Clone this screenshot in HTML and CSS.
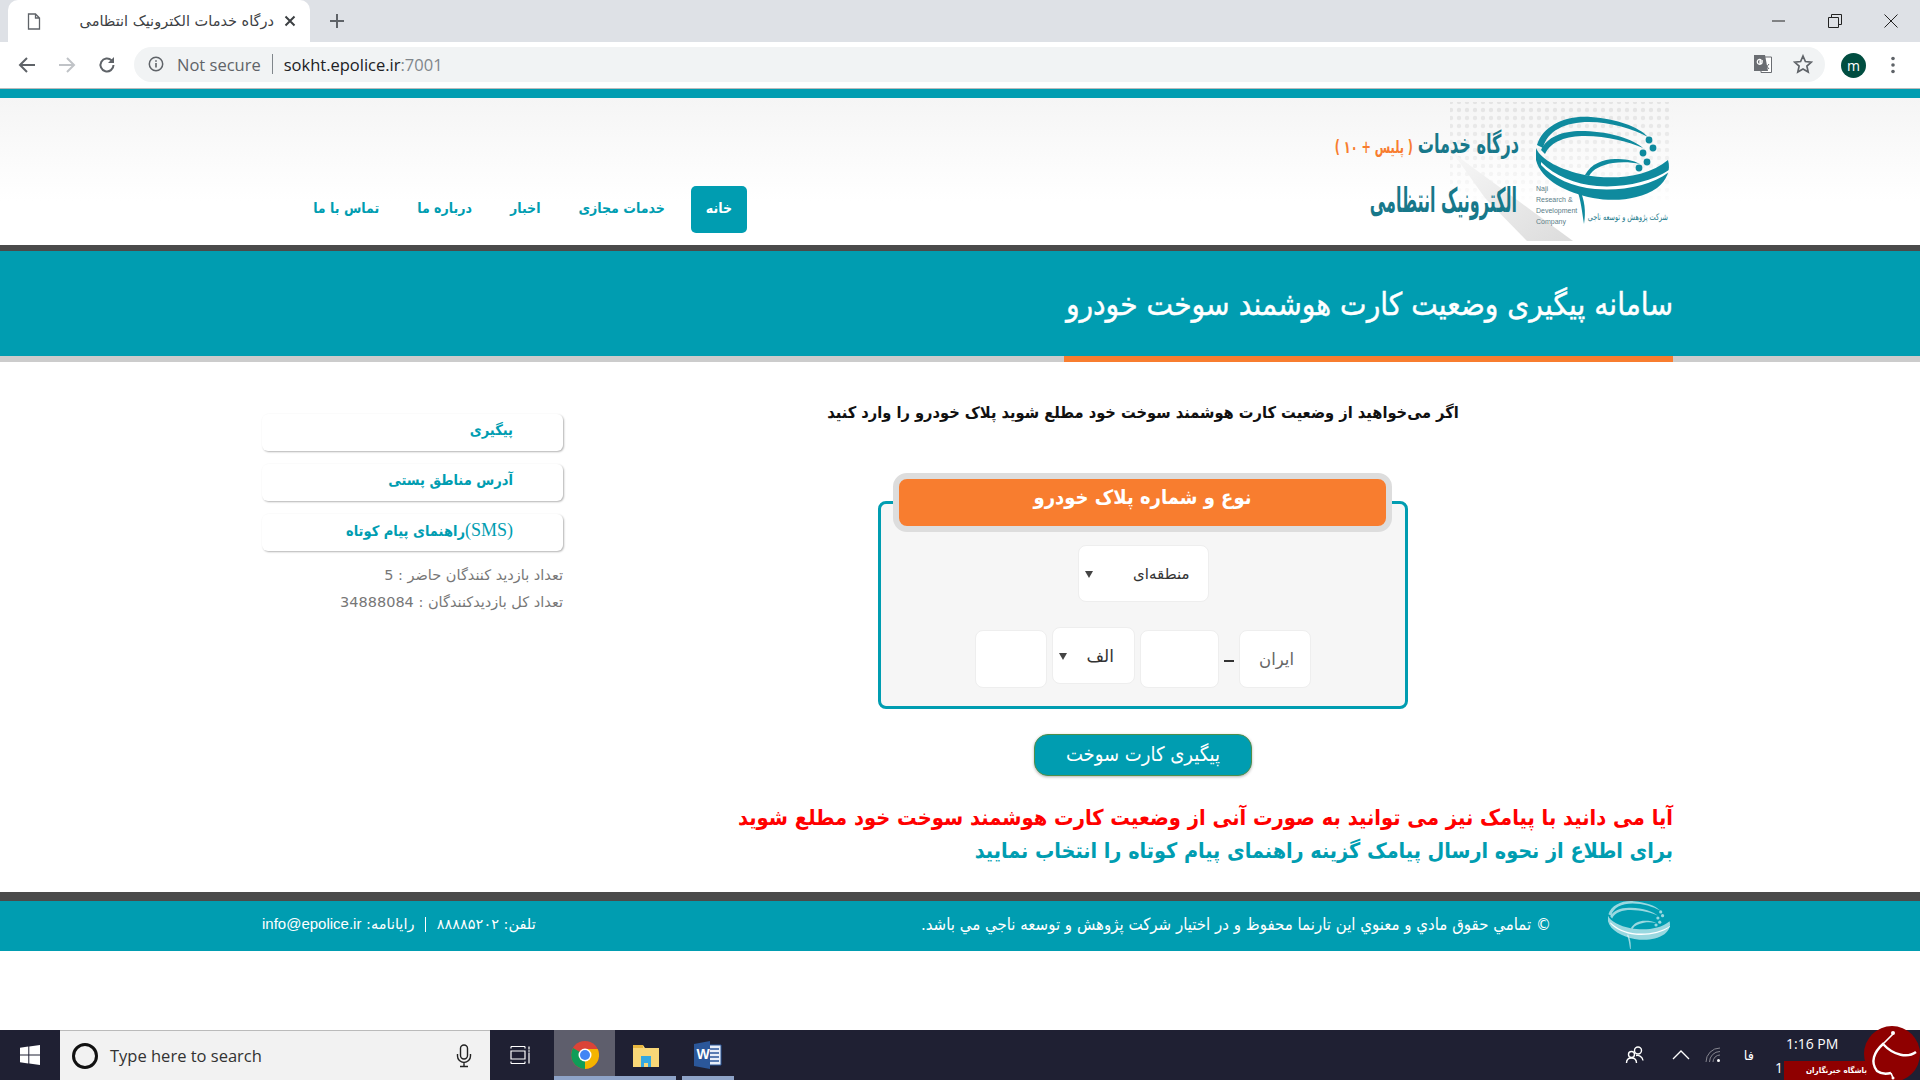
FILE: index.html
```html
<!DOCTYPE html>
<html lang="fa">
<head>
  <meta charset="UTF-8">
  <title>درگاه خدمات الکترونیک انتظامی</title>
  <link rel="stylesheet" href="styles.css">
</head>
<body>
  <svg class="defs" width="0" height="0" aria-hidden="true">
    <defs>
      <symbol id="rings" viewBox="195 10 145 120">
        <path d="M202 47C208 27 232 17 256 19C282 21 304 29 313 39C298 31 276 24 254 24C230 24 212 33 208 50Z"/>
        <path d="M206 52C212 38 230 32 250 33C276 34 298 41 308 50C294 44 272 38 250 38C232 38 216 43 210 56Z"/>
        <path d="M201 50C206 62 226 72 250 77C276 82 312 80 333 62C336 72 332 82 322 90C304 102 280 104 258 100C232 95 206 82 201 62Z"/>
        <path class="ring-gap" d="M206 64C220 78 240 86 262 88C288 90 316 84 334 72L334 74C316 88 288 93 260 91C238 89 218 80 206 67Z"/>
        <path d="M250 77C256 66 268 61 280 61C290 61 298 62 305 66C296 64 286 64 278 65C266 67 258 71 254 78Z"/>
        <path d="M244 90C250 102 251 114 249 126C247 114 246 102 242 92Z"/>
        <circle cx="314" cy="42" r="3.4"/>
        <circle cx="318" cy="50" r="3.4"/>
        <circle cx="308" cy="55" r="3.4"/>
        <circle cx="312" cy="64" r="3.4"/>
        <circle cx="304" cy="70" r="3.4"/>
      </symbol>
    </defs>
  </svg>

  <!-- browser chrome -->
  <div class="tabstrip">
    <div class="tab">
      <svg class="tab-doc" width="14" height="17" viewBox="0 0 14 17"><path d="M1.5 1h7l4 4v11h-11zM8.5 1v4h4" fill="none" stroke="#5f6368" stroke-width="1.3"/></svg>
      <span class="tab-title">درگاه خدمات الکترونیک انتظامی</span>
      <svg width="12" height="12" viewBox="0 0 12 12"><path d="M1.5 1.5l9 9M10.500 1.5l-9 9" stroke="#3c4043" stroke-width="2"/></svg>
    </div>
    <svg class="tab-new" width="16" height="16" viewBox="0 0 16 16"><path d="M8 1v14M1 8h14" stroke="#5f6368" stroke-width="2"/></svg>
    <div class="win-controls">
      <svg width="14" height="14" viewBox="0 0 14 14"><path d="M0 7h13" stroke="#222" stroke-width="1"/></svg>
      <svg width="14" height="14" viewBox="0 0 14 14"><path d="M.5 3.5h10v10H.5zM3.5 3V.5h10v10H11" fill="none" stroke="#222"/></svg>
      <svg width="14" height="14" viewBox="0 0 14 14"><path d="M.5.5l13 13M13.5.5l-13 13" stroke="#222"/></svg>
    </div>
  </div>
  <div class="toolbar">
    <svg width="18" height="18" viewBox="0 0 18 18"><path d="M17 9H2.500M9 2L2 9l7 7" fill="none" stroke="#5f6368" stroke-width="2"/></svg>
    <svg width="18" height="18" viewBox="0 0 18 18"><path d="M1 9h14.500M9 2l7 7-7 7" fill="none" stroke="#c0c3c7" stroke-width="2"/></svg>
    <svg width="18" height="18" viewBox="0 0 18 18"><path d="M15.500 9A6.500 6.500 0 1 1 13.600 4.400" fill="none" stroke="#5f6368" stroke-width="2"/><path d="M16 1v6h-6z" fill="#5f6368"/></svg>
    <div class="omnibox">
      <svg width="16" height="16" viewBox="0 0 16 16"><circle cx="8" cy="8" r="6.700" fill="none" stroke="#5f6368" stroke-width="1.500"/><path d="M8 7v4.500M8 4.200v1.600" stroke="#5f6368" stroke-width="1.600"/></svg>
      <span class="not-secure">Not secure</span>
      <span class="omni-sep"></span>
      <span class="url">sokht.epolice.ir<span class="url-port">:7001</span></span>
      <svg class="omni-translate" width="20" height="20" viewBox="0 0 20 20"><path d="M8 3h10.500v15.500H8z" fill="#fff" stroke="#6a6d72"/><path d="M1 1h11l3 16H1z" fill="#6a6d72"/><path d="M10 7H7v2h2a2.500 2.500 0 1 1-.7-3.200" fill="none" stroke="#fff" stroke-width="1.300"/><path d="M12 10l4 5M16 10l-4 5" stroke="#6a6d72"/></svg>
      <svg class="omni-star" width="20" height="20" viewBox="0 0 20 20"><path d="M10 2l2.400 5.500 6 .6-4.500 4 1.300 5.900L10 15l-5.200 3 1.300-5.900-4.500-4 6-.6z" fill="none" stroke="#5f6368" stroke-width="1.700"/></svg>
    </div>
    <span class="avatar">m</span>
    <svg class="kebab" width="6" height="20" viewBox="0 0 6 20"><circle cx="3" cy="3.500" r="1.800" fill="#5f6368"/><circle cx="3" cy="10" r="1.800" fill="#5f6368"/><circle cx="3" cy="16.500" r="1.800" fill="#5f6368"/></svg>
  </div>

  <!-- site -->
  <div class="page" dir="rtl">
    <header class="site-header">
      <div class="container header-row">
        <svg class="logo" width="338" height="147" viewBox="0 0 338 147">
          <defs>
            <pattern id="dots" width="8" height="8" patternUnits="userSpaceOnUse"><circle cx="4" cy="4" r="2.200" fill="#e3e3e3"/></pattern>
            <linearGradient id="dotfade" x1="0" y1="0" x2="0" y2="1"><stop offset="0" stop-color="#fff"/><stop offset="1" stop-color="#000"/></linearGradient>
            <linearGradient id="wedge" x1="0" y1="0" x2="1" y2="1"><stop offset="0" stop-color="#f7f7f7"/><stop offset="1" stop-color="#dcdcdc"/></linearGradient>
            <mask id="dotmask"><rect width="338" height="110" fill="url(#dotfade)"/></mask>
          </defs>
          <rect x="115" y="4" width="223" height="100" fill="url(#dots)" mask="url(#dotmask)"/>
          <path d="M118 55L238 143H192L150 100z" fill="url(#wedge)"/>
          <use href="#rings" x="195" y="10" width="145" height="120" class="logo-rings"/>
          <text class="logo-title" transform="translate(184 55) scale(.62 1)">درگاه خدمات</text>
          <text class="logo-plus" transform="translate(78 55) scale(.66 1)">( پلیس + ۱۰ )</text>
          <text class="logo-title logo-title-big" transform="translate(182 114) scale(.47 1)">الکترونیک انتظامی</text>
          <text class="logo-en" x="201" y="93">Naji</text>
          <text class="logo-en" x="201" y="104">Research &amp;</text>
          <text class="logo-en" x="201" y="115">Development</text>
          <text class="logo-en" x="201" y="126">Company</text>
          <text class="logo-co" transform="translate(333 122) scale(.72 1)">شرکت پژوهش و توسعه ناجی</text>
        </svg>
        <nav class="main-nav">
          <a class="nav-link active">خانه</a>
          <a class="nav-link">خدمات مجازی</a>
          <a class="nav-link">اخبار</a>
          <a class="nav-link">درباره ما</a>
          <a class="nav-link">تماس با ما</a>
        </nav>
      </div>
    </header>

    <section class="title-band">
      <div class="container"><h1>سامانه پیگیری وضعیت کارت هوشمند سوخت خودرو</h1></div>
    </section>
    <div class="title-rule"><div class="container"><span class="title-rule-accent"></span></div></div>

    <div class="container content">
      <main class="main-col">
        <p class="intro">اگر می‌خواهید از وضعیت کارت هوشمند سوخت خود مطلع شوید پلاک خودرو را وارد کنید</p>

        <div class="plate-box">
          <div class="plate-title"><span>نوع و شماره پلاک خودرو</span></div>
          <div class="plate-row plate-row-type">
            <div class="select-wrap select-type"><select><option>منطقه‌ای</option></select></div>
          </div>
          <div class="plate-row">
            <input class="plate-input input-iran" placeholder="ایران">
            <span class="plate-dash"></span>
            <input class="plate-input input-three">
            <div class="select-wrap select-letter"><select><option>الف</option></select></div>
            <input class="plate-input input-two">
          </div>
        </div>

        <button class="track-btn">پیگیری کارت سوخت</button>

        <div class="notes">
          <p class="note-red">آیا می دانید با پیامک نیز می توانید به صورت آنی از وضعیت کارت هوشمند سوخت خود مطلع شوید</p>
          <p class="note-teal">برای اطلاع از نحوه ارسال پیامک گزینه راهنمای پیام کوتاه را انتخاب نمایید</p>
        </div>
      </main>

      <aside class="sidebar">
        <a class="side-link">پیگیری</a>
        <a class="side-link">آدرس مناطق پستی</a>
        <a class="side-link"><span class="sms">(SMS)</span>راهنمای پیام کوتاه</a>
        <p class="stat stat-first">تعداد بازدید کنندگان حاضر : 5</p>
        <p class="stat">تعداد کل بازدیدکنندگان : 34888084</p>
      </aside>
    </div>

    <footer class="site-footer">
      <div class="container footer-row">
        <svg class="footer-logo" width="68" height="48" viewBox="0 0 68 48"><use href="#rings" y="-4" width="68" height="56"/></svg>
        <span class="copyright">© تمامي حقوق مادي و معنوي اين تارنما محفوظ و در اختيار شركت پژوهش و توسعه ناجي مي باشد.</span>
        <span class="contact">تلفن: ۸۸۸۸۵۲۰۲ <i class="contact-sep"></i> رایانامه: <bdi>info@epolice.ir</bdi></span>
      </div>
    </footer>
  </div>

  <!-- windows taskbar -->
  <div class="taskbar">
    <div class="tb-start">
      <svg width="20" height="20" viewBox="0 0 20 20"><path d="M0 2.800l8.300-1.200v8H0zM9.300 1.400L20 0v9.600H9.300zM0 10.500h8.300v8L0 17.300zM9.300 10.500H20V20L9.300 18.600z" fill="#fff"/></svg>
    </div>
    <div class="tb-search">
      <svg width="28" height="28" viewBox="0 0 28 28"><circle cx="14" cy="14" r="11.500" fill="none" stroke="#111" stroke-width="3"/></svg>
      <span class="tb-search-text">Type here to search</span>
      <svg class="tb-mic" width="16" height="24" viewBox="0 0 16 24"><rect x="4.500" y="1" width="7" height="14" rx="3.500" fill="none" stroke="#222" stroke-width="1.400"/><path d="M1.500 10v2a6.500 6.500 0 0 0 13 0v-2M8 18.500V22M4 22.500h8" fill="none" stroke="#222" stroke-width="1.400"/></svg>
    </div>
    <div class="tb-app tb-taskview">
      <svg width="20" height="18" viewBox="0 0 20 18"><path d="M1 .5h14M1 17.500h14M1 5h14v8H1zM19 .5v3M19 6.500v11M1 .5v2M15 .5v2M1 15.500v2M15 15.500v2" fill="none" stroke="#fff" stroke-width="1.200"/><path d="M18 4.500h2v1h-2z" fill="#fff"/></svg>
    </div>
    <div class="tb-app tb-chrome tb-active">
      <svg width="28" height="28" viewBox="0 0 28 28">
        <circle cx="14" cy="14" r="14" fill="#db4437"/>
        <path d="M14 8h12.700A14 14 0 0 1 14 28l-4-3z" fill="#f4b400"/>
        <path d="M14 14L14 28A14 14 0 0 1 2 7z" fill="#0f9d58"/>
        <circle cx="14" cy="14" r="6.500" fill="#fff"/><circle cx="14" cy="14" r="5" fill="#4285f4"/>
      </svg>
    </div>
    <div class="tb-app tb-folder tb-open">
      <svg width="28" height="28" viewBox="0 0 28 28"><path d="M1 4h10l2 3h14v19H1z" fill="#f9d777"/><path d="M1 4h10v3H1z" fill="#e8b63f"/><path d="M9 26V15h10v11h-3v-4h-4v4z" fill="#35a8e0"/></svg>
    </div>
    <div class="tb-app tb-word tb-open">
      <svg width="28" height="28" viewBox="0 0 28 28"><path d="M10 4h17v20H10z" fill="#e8eef8" stroke="#2b579a"/><path d="M15 8h10M15 12h10M15 16h10M15 20h10" stroke="#2b579a" stroke-width="1.500"/><path d="M0 3l16-3v28L0 25z" fill="#2b579a"/><text class="tb-word-w" x="2.500" y="18">W</text></svg>
    </div>
    <div class="tray">
      <svg width="20" height="20" viewBox="0 0 20 20"><circle cx="13" cy="5.500" r="3.500" fill="none" stroke="#fff" stroke-width="1.400"/><circle cx="6.500" cy="9.500" r="3" fill="none" stroke="#fff" stroke-width="1.400"/><path d="M1.500 18c0-3 2-5 5-5s5 2 5 5M11 10.500c3-.5 6.500 1 7 5" fill="none" stroke="#fff" stroke-width="1.400"/></svg>
      <svg class="tray-chevron" width="18" height="10" viewBox="0 0 18 10"><path d="M1 9l8-8 8 8" fill="none" stroke="#fff" stroke-width="1.300"/></svg>
      <svg class="tray-wifi" width="16" height="16" viewBox="0 0 16 16"><path d="M1 15A14 14 0 0 1 15 1M4.500 15A10.500 10.500 0 0 1 15 4.500M8 15a7 7 0 0 1 7-7" fill="none" stroke="#85858f"/><circle cx="13.500" cy="13.500" r="1.500" fill="#fff"/></svg>
      <span class="tray-lang">فا</span>
      <div class="tray-clock"><span>1:16 PM</span><span class="tray-date">1</span></div>
    </div>
    <div class="watermark">
      <div class="wm-ribbon">باشگاه خبرنگاران</div>
      <div class="wm-circle">
        <svg width="56" height="56" viewBox="0 0 56 56"><path d="M52 26C44 32 30 30 19 18C10 26 6 36 13 45C17 48 23 48 27 47" fill="none" stroke="#fff" stroke-width="2.400"/><path d="M29 8C25 12 22 15 19 18M27 47L29 52" fill="none" stroke="#fff" stroke-width="1.600"/><circle cx="29" cy="7" r="2" fill="#fff"/><circle cx="29" cy="52" r="1.500" fill="#fff"/></svg>
      </div>
    </div>
  </div>
</body>
</html>
```

FILE: styles.css
```css
:root {
  --teal: #009db1;
  --dark: #4a4a4a;
  --orange: #f87d2f;
  --chrome-gray: #5f6368;
  --fa-font: "DejaVu Sans", sans-serif;
  --fa-narrow: "DejaVu Sans Condensed", "DejaVu Sans", sans-serif;
  --ui-font: "Open Sans", "DejaVu Sans", sans-serif;
}

* {
  box-sizing: border-box;
  margin: 0;
  padding: 0;
}

html, body {
  height: 100%;
}

body {
  display: flex;
  flex-direction: column;
  height: 1080px;
  overflow: hidden;
  background: #fff;
  font-family: var(--fa-font);
}

.defs {
  position: absolute;
}

/* browser chrome */
.tabstrip {
  display: flex;
  align-items: center;
  flex: 0 0 42px;
  height: 42px;
  background: #dee1e6;
}

.tab {
  display: flex;
  align-items: center;
  width: 302px;
  height: 42px;
  margin-left: 8px;
  padding: 0 14px 0 19px;
  background: #fff;
  border-radius: 10px 10px 0 0;
}

.tab-title {
  flex: 1;
  margin: 0 10px 0 33px;
  direction: rtl;
  font-size: 14.5px;
  white-space: nowrap;
  color: #3c4043;
}

.tab-new {
  margin-left: 19px;
}

.win-controls {
  display: flex;
  gap: 42px;
  margin-left: auto;
  padding-right: 22px;
}

.toolbar {
  display: flex;
  align-items: center;
  gap: 22px;
  flex: 0 0 47px;
  height: 47px;
  padding: 0 24px 0 18px;
  background: #fff;
  border-bottom: 1px solid #bbb;
}

.omnibox {
  display: flex;
  align-items: center;
  flex: 1;
  height: 35px;
  margin-left: -4px;
  margin-bottom: 2px;
  padding: 0 12px 0 14px;
  background: #f1f3f4;
  border-radius: 18px;
  font-family: var(--ui-font);
  font-size: 16.5px;
}

.not-secure {
  margin-left: 13px;
  color: var(--chrome-gray);
}

.omni-sep {
  width: 1px;
  height: 20px;
  margin: 0 11px;
  background: #80868b;
}

.url {
  color: #202124;
}

.url-port {
  color: #80868b;
}

.omni-translate {
  margin-left: auto;
  margin-right: 20px;
}

.avatar {
  display: flex;
  align-items: center;
  justify-content: center;
  width: 25px;
  height: 25px;
  margin-left: -6px;
  border-radius: 50%;
  background: #004d40;
  color: #fff;
  font-family: var(--ui-font);
  font-size: 14px;
}

.kebab {
  margin-left: 2px;
}

/* site */
.page {
  flex: 1;
  min-height: 0;
}

.container {
  width: 1411px;
  margin-right: 247px;
}

.site-header {
  height: 162px;
  border-top: 9px solid var(--teal);
  border-bottom: 6px solid var(--dark);
  background: linear-gradient(#f5f5f5, #fff 70%);
}

.header-row {
  display: flex;
  align-items: flex-end;
  height: 147px;
}

.logo {
  flex: none;
}

.logo text {
  direction: rtl;
  font-family: var(--fa-font);
}

.logo-rings {
  fill: #0f8a9e;
}

.ring-gap {
  fill: #fff;
}

.logo .logo-title {
  font-size: 26px;
  font-weight: bold;
  fill: #17788a;
}

.logo .logo-title-big {
  font-size: 34px;
}

.logo .logo-plus {
  font-size: 17px;
  font-weight: bold;
  fill: #f87d2f;
}

.logo .logo-en {
  direction: ltr;
  font-family: "Liberation Sans", sans-serif;
  font-size: 7px;
  fill: #5a7d88;
}

.logo .logo-co {
  font-size: 9px;
  fill: #17788a;
}

.main-nav {
  display: flex;
  align-items: center;
  margin-bottom: 12px;
  margin-right: 588px;
}

.nav-link {
  height: 47px;
  padding: 0 19px;
  font-family: var(--fa-narrow);
  font-size: 14px;
  font-weight: bold;
  line-height: 45px;
  color: var(--teal);
}

.nav-link.active {
  margin-left: 7px;
  padding: 0 15px;
  border-radius: 5px;
  background: var(--teal);
  color: #fff;
}

.title-band {
  height: 105px;
  background: var(--teal);
}

.title-band h1 {
  padding-top: 33px;
  font-family: var(--fa-narrow);
  font-size: 31.3px;
  font-weight: normal;
  line-height: 40px;
  color: #fff;
  -webkit-text-stroke: 0.4px #fff;
}

.title-rule {
  height: 6px;
  background: #ccc;
}

.title-rule-accent {
  display: block;
  width: 609px;
  height: 6px;
  background: var(--orange);
}

.content {
  display: flex;
  gap: 50px;
  height: 530px;
}

.main-col {
  display: flex;
  flex-direction: column;
  align-items: center;
  width: 1060px;
}

.intro {
  margin-top: 39px;
  font-family: var(--fa-narrow);
  font-size: 16.3px;
  font-weight: bold;
  line-height: 24px;
  color: #111;
}

.plate-box {
  position: relative;
  width: 530px;
  height: 208px;
  margin-top: 76px;
  padding-top: 41px;
  background: #f6f6f6;
  border: 3px solid var(--teal);
  border-radius: 8px;
}

.plate-title {
  position: absolute;
  top: -31px;
  left: 12px;
  width: 499px;
  height: 59px;
  background: var(--orange);
  border: 6px solid #ddd;
  border-radius: 14px;
  color: #fff;
  font-family: var(--fa-narrow);
  font-size: 20px;
  font-weight: bold;
  line-height: 36px;
  text-align: center;
}

.plate-row {
  display: flex;
  justify-content: center;
  align-items: flex-start;
}

.plate-row-type {
  margin-bottom: 28px;
}

.plate-row:last-child {
  gap: 5px;
}

.select-wrap {
  position: relative;
  background: #fff;
  border: 1px solid #eee;
  border-radius: 8px;
}

.select-wrap::after {
  content: "";
  position: absolute;
  top: 25px;
  left: 6px;
  border: 4px solid transparent;
  border-top: 7px solid #444;
  border-bottom: 0;
}

.select-wrap select {
  width: 100%;
  height: 100%;
  appearance: none;
  border: none;
  background: transparent;
  font-family: var(--fa-font);
  font-size: 15px;
  color: #333;
  padding-right: 18px;
}

.select-type {
  width: 131px;
  height: 57px;
}

.select-letter {
  width: 83px;
  height: 57px;
  margin-top: -3px;
}

.select-letter select {
  font-size: 17px;
  padding-right: 20px;
}

.plate-input {
  height: 58px;
  background: #fff;
  border: 1px solid #eee;
  border-radius: 8px;
  font-family: var(--fa-font);
  font-size: 16.5px;
  padding: 0 16px;
}

.plate-input::placeholder {
  color: #666;
}

.input-iran {
  width: 72px;
}

.input-three {
  width: 79px;
}

.input-two {
  width: 72px;
}

.plate-dash {
  width: 10px;
  height: 2px;
  margin-top: 30px;
  background: #333;
}

.track-btn {
  width: 218px;
  height: 42px;
  margin-top: 25px;
  padding-bottom: 2px;
  background: var(--teal);
  border: 1px solid #4f8f4a;
  border-radius: 14px;
  box-shadow: 0 1px 3px rgba(0,0,0,0.3);
  color: #fff;
  font-family: var(--fa-narrow);
  font-size: 20px;
  cursor: pointer;
}

.notes {
  align-self: stretch;
  margin-top: 25px;
  font-family: var(--fa-narrow);
  font-weight: bold;
  line-height: 33px;
}

.note-red {
  font-size: 21.7px;
  color: #f00;
}

.note-teal {
  font-size: 21.4px;
  color: var(--teal);
}

.sidebar {
  width: 301px;
  padding-top: 52px;
}

.side-link {
  display: block;
  height: 37px;
  margin-bottom: 13px;
  padding-right: 50px;
  background: #fff;
  border-radius: 6px;
  box-shadow: 1px 1px 2px rgba(0,0,0,0.3);
  font-family: var(--fa-narrow);
  font-size: 14.5px;
  font-weight: bold;
  line-height: 33px;
  color: var(--teal);
}

.sms {
  font-family: "Liberation Serif", serif;
  font-size: 18px;
  font-weight: normal;
}

.stat {
  font-size: 14.5px;
  line-height: 27px;
  color: #777;
}

.stat-first {
  margin-top: -2px;
}

.site-footer {
  height: 59px;
  border-top: 9px solid var(--dark);
  background: var(--teal);
  color: #fff;
  font-size: 14.5px;
}

.footer-row {
  display: flex;
  align-items: center;
  height: 50px;
  padding-bottom: 5px;
}

.footer-logo {
  align-self: flex-start;
  fill: rgba(255,255,255,0.6);
}

.footer-logo .ring-gap {
  fill: #009db1;
}

.copyright {
  margin-right: 54px;
  font-family: var(--fa-narrow);
  font-size: 16.7px;
}

.contact {
  margin-right: auto;
}

.contact-sep {
  display: inline-block;
  width: 1px;
  height: 15px;
  margin: 0 6px;
  vertical-align: middle;
  background: #fff;
}

.contact bdi {
  font-family: "Liberation Sans", sans-serif;
  font-size: 15px;
}

/* windows taskbar */
.taskbar {
  position: relative;
  display: flex;
  flex: 0 0 50px;
  height: 50px;
  background: #1f2033;
}

.tb-start {
  display: flex;
  align-items: center;
  justify-content: center;
  width: 60px;
}

.tb-search {
  display: flex;
  align-items: center;
  width: 430px;
  padding: 0 12px 0 11px;
  background: #f2f2f2;
  border-top: 1px solid #bbb;
}

.tb-search-text {
  margin-left: 11px;
  font-family: var(--ui-font);
  font-size: 16.5px;
  color: #333;
}

.tb-mic {
  margin-left: auto;
  margin-right: 6px;
}

.tb-app {
  display: flex;
  align-items: center;
  justify-content: center;
  position: relative;
  height: 50px;
}

.tb-taskview {
  width: 64px;
  padding-right: 4px;
}

.tb-chrome {
  width: 61px;
}

.tb-folder {
  width: 61px;
  margin-right: 6px;
}

.tb-word {
  width: 52px;
}

.tb-active {
  background: #5e5e6c;
}

.tb-active::after,
.tb-open::after {
  content: "";
  position: absolute;
  left: 0;
  right: 0;
  bottom: 0;
  height: 4px;
  background: #8ea3c8;
}

.tb-word-w {
  font-family: "Liberation Sans", sans-serif;
  font-size: 14px;
  font-weight: bold;
  fill: #fff;
}

.tray {
  display: flex;
  align-items: center;
  margin-left: auto;
  padding-right: 82px;
  color: #fff;
}

.tray-chevron {
  margin-left: 27px;
}

.tray-wifi {
  margin-left: 15px;
}

.tray-lang {
  margin-left: 23px;
  font-size: 13px;
}

.tray-clock {
  display: flex;
  flex-direction: column;
  align-items: flex-start;
  align-self: flex-start;
  margin-left: 32px;
  width: 52px;
  white-space: nowrap;
  font-family: var(--ui-font);
  font-size: 14px;
  line-height: 24px;
  padding-top: 2px;
}

.tray-date {
  margin-left: -11px;
}

.watermark {
  position: absolute;
  right: 0;
  bottom: 0;
  width: 136px;
  height: 54px;
}

.wm-circle {
  position: absolute;
  top: 0;
  right: 0;
  width: 56px;
  height: 56px;
  border-radius: 50%;
  background: #8f0000;
}

.wm-ribbon {
  position: absolute;
  left: 0;
  bottom: 0;
  width: 105px;
  height: 19px;
  background: #8f0000;
  color: #fff;
  direction: rtl;
  font-family: var(--fa-narrow);
  font-size: 8px;
  font-weight: bold;
  line-height: 19px;
  text-align: center;
}
```
